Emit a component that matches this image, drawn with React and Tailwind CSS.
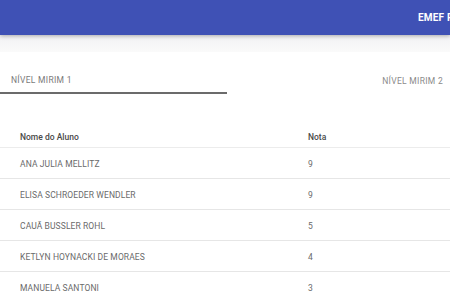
const alunos = [
  { nome: 'ANA JULIA MELLITZ', nota: 9 },
  { nome: 'ELISA SCHROEDER WENDLER', nota: 9 },
  { nome: 'CAUÃ BUSSLER ROHL', nota: 5 },
  { nome: 'KETLYN HOYNACKI DE MORAES', nota: 4 },
  { nome: 'MANUELA SANTONI', nota: 3 },
]

export default function App() {
  return (
    <div className="w-[450px] h-[300px] overflow-hidden bg-white font-['Roboto',sans-serif]">
      {/* Barra superior */}
      <div className="relative z-10 h-[35px] bg-[#3f51b5] shadow-[0_1px_4px_rgba(0,0,0,0.3)] flex items-center pl-[418px] whitespace-nowrap">
        <span className="text-white text-[10px] font-bold tracking-[0.2px]">EMEF PROFESSORA</span>
      </div>
      <div className="h-[17px] bg-gradient-to-b from-[#f2f2f4] to-[#fafafa]"></div>

      {/* Abas */}
      <div className="flex h-[42px] items-stretch">
        <div className="w-[227px] flex items-center pl-[11px] pt-[17px] border-b-2 border-[#6b6b6b]">
          <span className="text-[8.5px] text-[#7a7a7a] tracking-[0.3px]">NÍVEL MIRIM 1</span>
        </div>
        <div className="flex-1 flex items-center justify-end pr-[7px] pt-[17px]">
          <span className="text-[8.5px] text-[#8a8a8a] tracking-[0.3px]">NÍVEL MIRIM 2</span>
        </div>
      </div>

      {/* Tabela */}
      <div className="pt-[31px]">
        <div className="flex items-center pt-[3px] h-[23px] border-b border-[#ececec] text-[8.5px] font-medium text-[#4a4a4a]">
          <span className="w-[308px] pl-[20px]">Nome do Aluno</span>
          <span>Nota</span>
        </div>
        {alunos.map((a) => (
          <div key={a.nome} className="flex items-center pt-[2px] h-[31px] border-b border-[#e6e6e6] text-[8.5px] text-[#6a6a6a] tracking-[0.1px]">
            <span className="w-[308px] pl-[20px]">{a.nome}</span>
            <span>{a.nota}</span>
          </div>
        ))}
      </div>
    </div>
  )
}
